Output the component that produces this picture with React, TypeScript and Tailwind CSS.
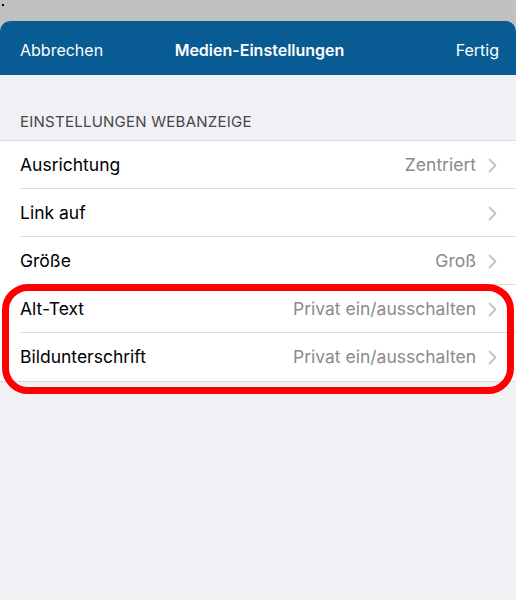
import React from "react";

interface RowProps {
  label: string;
  value?: string;
  last?: boolean;
}

const Chevron: React.FC = () => (
  <svg width="9" height="15" viewBox="0 0 9 15" fill="none" className="ml-[12px] shrink-0">
    <path d="M1.5 1.5l6 6-6 6" stroke="#c4c4c8" strokeWidth="1.8" strokeLinecap="round" strokeLinejoin="round" />
  </svg>
);

const Row: React.FC<RowProps> = ({ label, value, last }) => (
  <div className="pl-5 bg-white">
    <div
      className={`flex items-center h-12 pt-[2px] pr-[19px] ${last ? "" : "border-b border-[#dcdce0]"}`}
    >
      <span className="text-[17.5px] text-black flex-1">{label}</span>
      {value && <span className="text-[17.5px] text-[#8a8a8e]">{value}</span>}
      <Chevron />
    </div>
  </div>
);

export default function App() {
  const rows: RowProps[] = [
    { label: "Ausrichtung", value: "Zentriert" },
    { label: "Link auf" },
    { label: "Größe", value: "Groß" },
    { label: "Alt-Text", value: "Privat ein/ausschalten" },
    { label: "Bildunterschrift", value: "Privat ein/ausschalten", last: true },
  ];

  return (
    <div
      className="w-[516px] h-[600px] bg-[#c0c2c0] flex flex-col relative overflow-hidden"
      style={{ fontFamily: "Inter, 'Liberation Sans', sans-serif" }}
    >
      {/* stray dot at top-left */}
      <div className="absolute left-[2px] top-[4px] w-[2px] h-[2px] bg-black" />

      <div className="h-[21px] shrink-0" />

      <div className="flex-1 flex flex-col rounded-t-[10px] overflow-hidden bg-[#f0f0f5]">
        {/* Header */}
        <div className="h-[54px] pt-[3px] bg-[#085b93] grid grid-cols-[1fr_auto_1fr] items-center pl-5 pr-[17px] text-white text-[16px]">
          <span>Abbrechen</span>
          <span className="font-semibold">Medien-Einstellungen</span>
          <span className="text-right">Fertig</span>
        </div>

        {/* Section header */}
        <div className="pt-[36px] pb-[6px] px-5 text-[15px] text-[#46464b] tracking-[0.25px]">
          EINSTELLUNGEN WEBANZEIGE
        </div>

        <div className="border-t border-b border-[#dcdce0]">
          {rows.map((r) => (
            <Row key={r.label} {...r} />
          ))}
        </div>
      </div>

      {/* Red annotation */}
      <div className="absolute left-[2px] top-[284px] w-[512px] h-[110px] border-[7px] border-[#ff0000] rounded-[26px]" />
    </div>
  );
}
